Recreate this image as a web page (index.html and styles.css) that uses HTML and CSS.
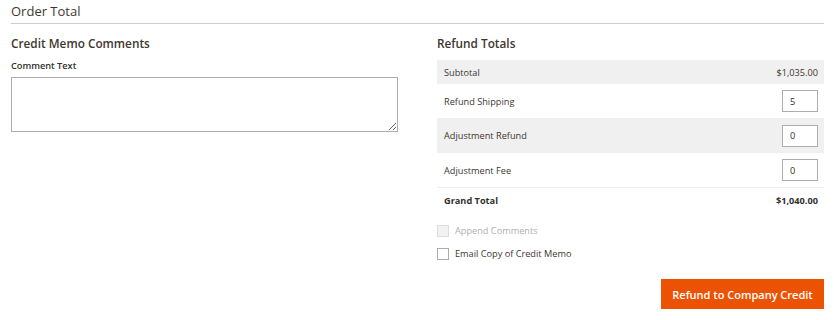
FILE: index.html
```html
<!DOCTYPE html>
<html lang="en">
<head>
    <meta charset="UTF-8">
    <meta name="viewport" content="width=device-width, initial-scale=1.0">
    <title>Order Total</title>
    <link rel="stylesheet" href="styles.css">
</head>
<body>

    <div class="page">
        <!-- Section header -->
        <div class="section-title">Order Total</div>

        <div class="columns">
            <!-- Comments column -->
            <div class="col">
                <div class="block-title">Credit Memo Comments</div>
                <label class="field-label" for="comment">Comment Text</label>
                <textarea class="comment-box" id="comment"></textarea>
            </div>

            <!-- Totals column -->
            <div class="col">
                <div class="block-title">Refund Totals</div>
                <table class="totals">
                    <tr class="row-sub">
                        <td>Subtotal</td>
                        <td class="amount">$1,035.00</td>
                    </tr>
                    <tr class="row-input">
                        <td>Refund Shipping</td>
                        <td class="amount"><input class="small-input" type="text" value="5"></td>
                    </tr>
                    <tr class="row-input shaded">
                        <td>Adjustment Refund</td>
                        <td class="amount"><input class="small-input" type="text" value="0"></td>
                    </tr>
                    <tr class="row-input">
                        <td>Adjustment Fee</td>
                        <td class="amount"><input class="small-input" type="text" value="0"></td>
                    </tr>
                    <tr class="row-grand">
                        <td>Grand Total</td>
                        <td class="amount">$1,040.00</td>
                    </tr>
                </table>

                <div class="options">
                    <label class="check disabled"><span class="box"></span>Append Comments</label>
                    <label class="check"><span class="box"></span>Email Copy of Credit Memo</label>
                </div>

                <div class="actions">
                    <button class="btn-primary">Refund to Company Credit</button>
                </div>
            </div>
        </div>
    </div>

</body>
</html>
```

FILE: styles.css
```css
body, html {
    margin: 0;
    background: #fff;
    font-family: "Open Sans", Arial, sans-serif;
    color: #303030;
}

.page {
    padding: 0 10px 0 11px;
}

/* Header with rule under it */
.section-title {
    font-size: 13px;
    color: #41362f;
    line-height: 23px;
    border-bottom: 1px solid #cccccc;
}

.columns {
    display: grid;
    grid-template-columns: 1fr 1fr;
    gap: 39px;
    padding-top: 10px;
}

.block-title {
    font-size: 11.8px;
    font-weight: 600;
    color: #41362f;
    line-height: 18px;
    margin-bottom: 8px;
}

.field-label {
    display: block;
    font-size: 9.2px;
    font-weight: 600;
    color: #303030;
    line-height: 12px;
    margin-bottom: 5px;
}

.comment-box {
    display: block;
    width: 100%;
    height: 55px;
    box-sizing: border-box;
    border: 1px solid #adadad;
    margin: 0;
    resize: vertical;
}

/* Totals table */
.totals {
    width: 100%;
    border-collapse: collapse;
    font-size: 9.2px;
    color: #41362f;
}

.totals td {
    padding: 0 6px 0 7px;
}

.totals .amount {
    text-align: right;
}

.row-sub td {
    background: #f0f0f0;
    height: 24px;
}

.row-input td {
    height: 34px;
}

.row-input.shaded td {
    background: #f0f0f0;
    height: 35px;
}

.small-input {
    width: 36px;
    height: 22px;
    box-sizing: border-box;
    border: 1px solid #adadad;
    padding: 0 7px;
    font-family: inherit;
    font-size: 9.2px;
    color: #303030;
    vertical-align: middle;
}

.row-grand td {
    border-top: 1px solid #eeeeee;
    height: 24px;
    font-weight: 700;
    color: #303030;
}

/* Checkboxes */
.options {
    display: flex;
    flex-direction: column;
    gap: 11px;
    padding-top: 13px;
}

.check {
    display: flex;
    align-items: center;
    gap: 6px;
    font-size: 9.2px;
    line-height: 12px;
    color: #41362f;
}

.check .box {
    width: 10px;
    height: 10px;
    border: 1px solid #adadad;
    background: #fff;
}

.check.disabled {
    color: #b0b0b0;
}

.check.disabled .box {
    background: #f2f2f2;
    border-color: #dddddd;
}

.actions {
    display: flex;
    justify-content: flex-end;
    padding-top: 19px;
}

.btn-primary {
    background: #eb5202;
    color: #ffffff;
    border: 0;
    width: 163px;
    height: 30px;
    font-family: inherit;
    font-size: 11px;
    font-weight: 600;
    cursor: pointer;
}
```
